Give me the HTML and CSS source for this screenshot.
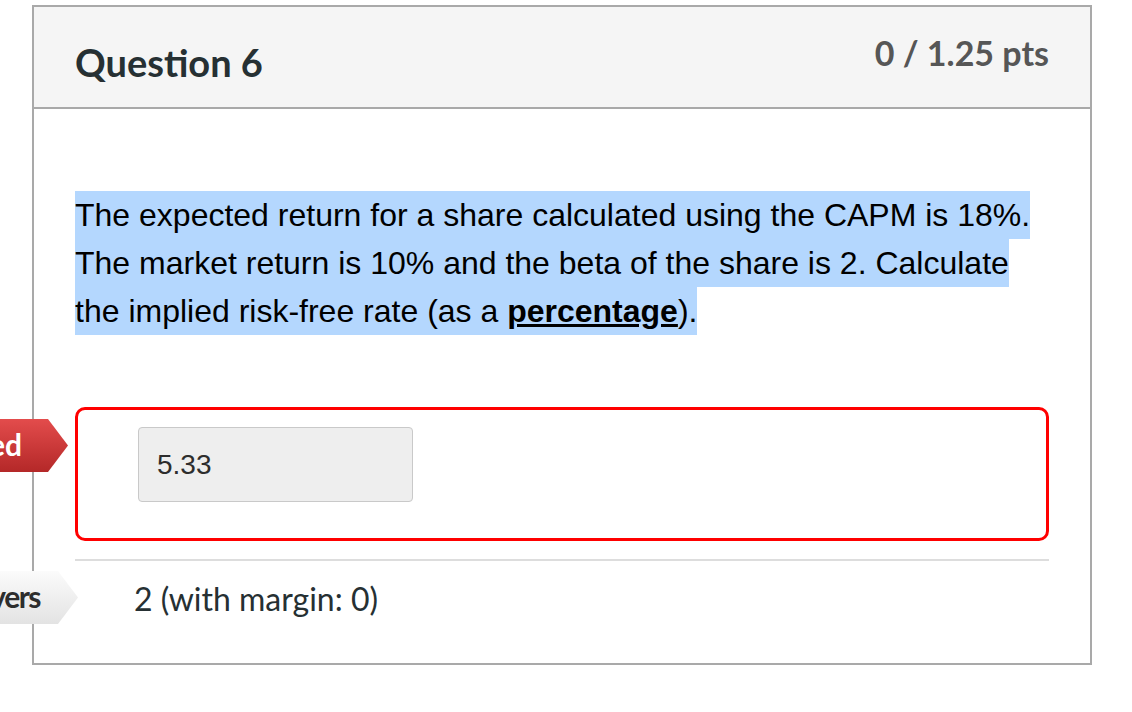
FILE: index.html
```html
<!DOCTYPE html>
<html>
<head>
<meta charset="utf-8">
<link rel="stylesheet" href="styles.css">
</head>
<body>
<div class="card">
  <div class="header">
    <h2 class="title">Question 6</h2>
    <div class="pts">0 / 1.25 pts</div>
  </div>
  <div class="content">
    <p class="question"><span class="sel">The expected return for a share calculated using the CAPM is 18%. The market return is 10% and the beta of the share is 2. Calculate the implied risk-free rate (as a <strong><u>percentage</u></strong>).</span></p>
    <div class="answer-row">
      <div class="badge badge-red">ed</div>
      <div class="answer-box">
        <div class="input">5.33</div>
      </div>
    </div>
    <div class="correct-row">
      <div class="badge badge-gray">vers</div>
      <div class="correct-text">2 (with margin: 0)</div>
    </div>
  </div>
</div>
</body>
</html>
```

FILE: styles.css
```css
html, body {
  margin: 0;
  padding: 0;
  background: #fff;
}
body {
  padding-top: 5px;
  font-family: Lato, "Liberation Sans", sans-serif;
}
.card {
  margin-left: 32px;
  width: 1056px;
  border: 2px solid #a9a9a9;
  height: 656px;
  box-sizing: content-box;
}
.header {
  height: 100px;
  background: #f5f5f5;
  border-bottom: 2px solid #a9a9a9;
  display: flex;
  justify-content: space-between;
  align-items: flex-start;
  padding: 0 41px;
}
.title {
  margin: 30px 0 0;
  font-size: 38px;
  font-weight: 700;
  color: #263033;
  line-height: 50px;
}
.pts {
  margin-top: 23px;
  font-size: 34px;
  font-weight: 700;
  color: #565656;
  line-height: 46px;
}
.content {
  padding: 82px 41px 0;
}
.question {
  margin: 0;
  font-family: "Liberation Sans", Arial, sans-serif;
  font-size: 32px;
  line-height: 48px;
  color: #000;
}
.sel {
  background: #b4d7fe;
  padding: 6.2px 0;
}
.question strong {
  font-weight: 700;
}
.answer-row {
  position: relative;
  margin-top: 72px;
}
.answer-box {
  border: 3px solid #ff0000;
  border-radius: 10px;
  height: 111px;
  padding: 17px 60px 0;
}
.input {
  box-sizing: border-box;
  width: 275px;
  height: 75px;
  background: #eeeeee;
  border: 1px solid #c9c9c9;
  border-radius: 4px;
  padding-left: 18px;
  font-family: "Liberation Sans", Arial, sans-serif;
  font-size: 28px;
  line-height: 73px;
  color: #2d2d2d;
}
.correct-row {
  position: relative;
  margin-top: 18px;
  border-top: 2px solid #dddddd;
  height: 100px;
}
.correct-text {
  padding: 19px 0 0 59px;
  font-size: 32px;
  line-height: 38px;
  color: #263033;
}
.badge {
  position: absolute;
  left: -75px;
  height: 53px;
  font-size: 30px;
  font-weight: 700;
  line-height: 51px;
  display: flex;
  justify-content: flex-end;
  box-sizing: border-box;
}
.badge-red {
  top: 12px;
  width: 68px;
  padding-right: 46px;
  color: #fff;
  background: linear-gradient(#e34c4c, #b42828);
  clip-path: polygon(0 0, 48px 0, 68px 50%, 48px 100%, 0 100%);
}
.badge-gray {
  top: 10px;
  width: 78px;
  padding-right: 38px;
  letter-spacing: -1.5px;
  color: #2d2d2d;
  background: linear-gradient(#fbfbfb, #e3e3e3);
  clip-path: polygon(0 0, 58px 0, 78px 50%, 58px 100%, 0 100%);
}
```
